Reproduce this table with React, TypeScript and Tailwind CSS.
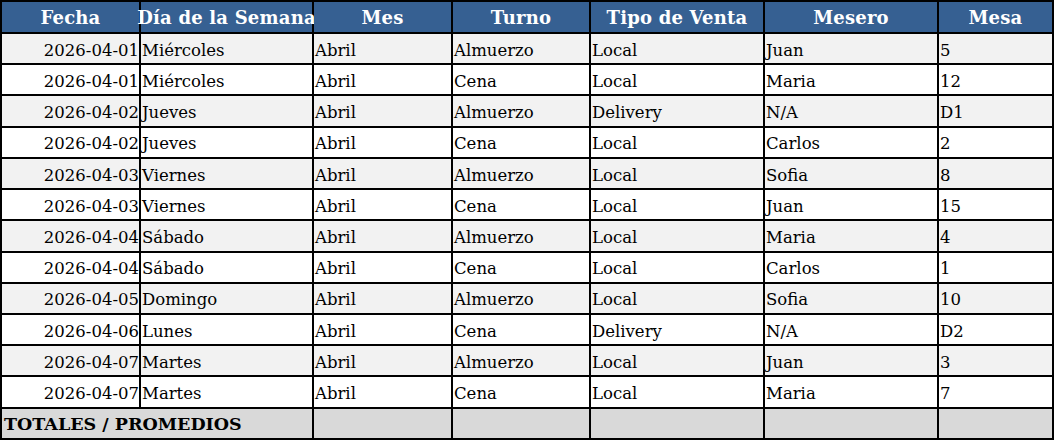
import React from "react";

const headers = ["Fecha", "Día de la Semana", "Mes", "Turno", "Tipo de Venta", "Mesero", "Mesa"];

const rows: string[][] = [
  ["2026-04-01", "Miércoles", "Abril", "Almuerzo", "Local", "Juan", "5"],
  ["2026-04-01", "Miércoles", "Abril", "Cena", "Local", "Maria", "12"],
  ["2026-04-02", "Jueves", "Abril", "Almuerzo", "Delivery", "N/A", "D1"],
  ["2026-04-02", "Jueves", "Abril", "Cena", "Local", "Carlos", "2"],
  ["2026-04-03", "Viernes", "Abril", "Almuerzo", "Local", "Sofia", "8"],
  ["2026-04-03", "Viernes", "Abril", "Cena", "Local", "Juan", "15"],
  ["2026-04-04", "Sábado", "Abril", "Almuerzo", "Local", "Maria", "4"],
  ["2026-04-04", "Sábado", "Abril", "Cena", "Local", "Carlos", "1"],
  ["2026-04-05", "Domingo", "Abril", "Almuerzo", "Local", "Sofia", "10"],
  ["2026-04-06", "Lunes", "Abril", "Cena", "Delivery", "N/A", "D2"],
  ["2026-04-07", "Martes", "Abril", "Almuerzo", "Local", "Juan", "3"],
  ["2026-04-07", "Martes", "Abril", "Cena", "Local", "Maria", "7"],
];

export default function App() {
  return (
    <div
      className="w-[1054px] h-[440px] overflow-hidden bg-white"
      style={{ fontFamily: '"DejaVu Serif", "Liberation Serif", serif' }}
    >
      <div className="grid grid-cols-[137px_171px_137px_136px_172px_172px_113px] grid-rows-[30px] auto-rows-[29.23px] gap-[2px] p-[2px] bg-black text-[16.5px] leading-none text-black">
        {headers.map((h) => (
          <div
            key={h}
            className="bg-[#366092] text-white font-bold text-[18px] tracking-[0.2px] flex items-center justify-center whitespace-nowrap overflow-visible pt-[2px]"
          >
            {h}
          </div>
        ))}
        {rows.map((r, i) => {
          const bg = i % 2 === 0 ? "bg-[#f2f2f2]" : "bg-white";
          return r.map((c, j) => (
            <div
              key={`${i}-${j}`}
              className={`${bg} flex items-end pb-[4px] whitespace-nowrap ${
                j === 0 ? "justify-end pr-[0px]" : "justify-start pl-[1px]"
              }`}
            >
              {c}
            </div>
          ));
        })}
        <div className="bg-[#d9d9d9] col-span-2 flex items-end pb-[4px] pl-[2px] font-bold text-[17.5px] whitespace-nowrap">
          TOTALES / PROMEDIOS
        </div>
        <div className="bg-[#d9d9d9]" />
        <div className="bg-[#d9d9d9]" />
        <div className="bg-[#d9d9d9]" />
        <div className="bg-[#d9d9d9]" />
        <div className="bg-[#d9d9d9]" />
      </div>
    </div>
  );
}
